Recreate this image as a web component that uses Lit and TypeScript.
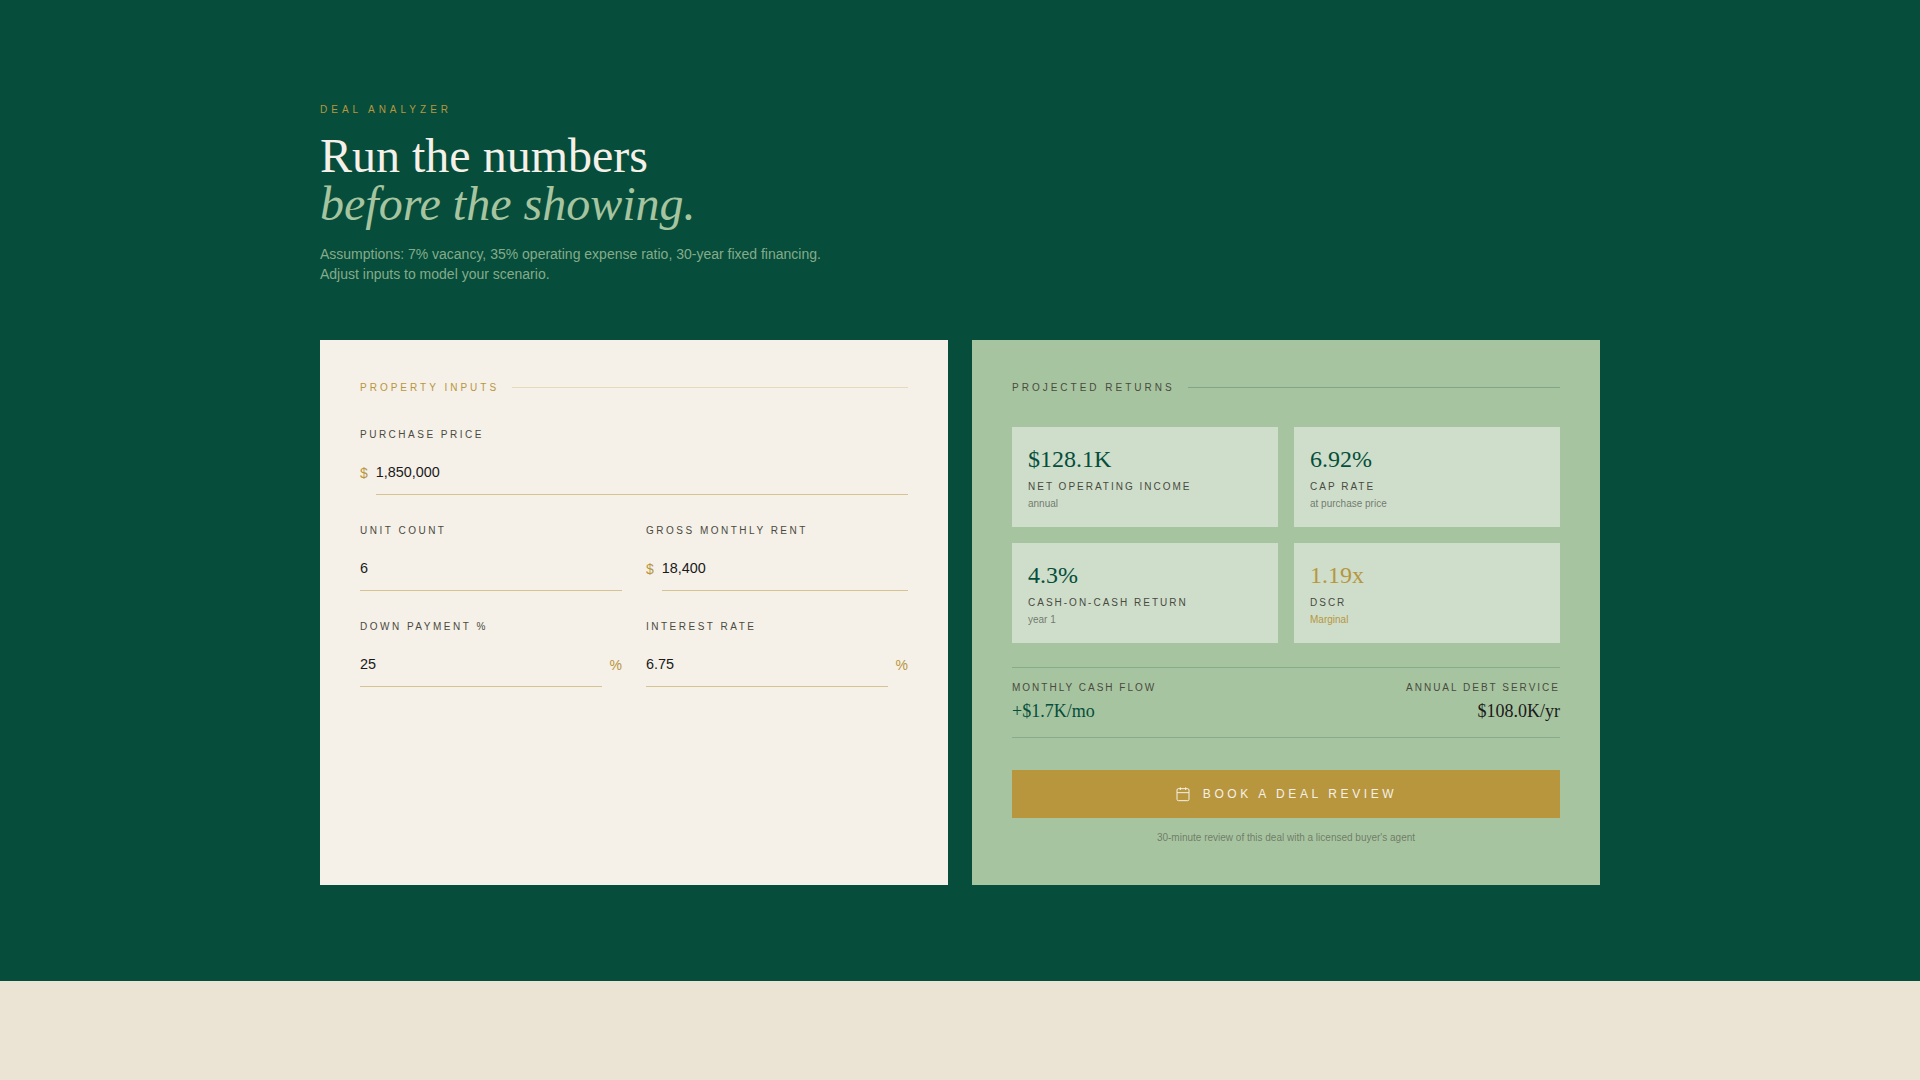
import { LitElement, html, css, nothing } from "lit";
import { customElement, property } from "lit/decorators.js";

@customElement("field-input")
class FieldInput extends LitElement {
  @property() label = "";
  @property() value = "";
  @property() prefixText = "";
  @property() suffixText = "";

  static styles = css`
    :host { display: block; min-width: 0; }
    .label {
      display: block;
      margin-bottom: 8px;
      font-size: 10px;
      line-height: 15px;
      letter-spacing: 0.25em;
      text-transform: uppercase;
      color: #4a4a3f;
    }
    .row { display: flex; align-items: center; gap: 8px; }
    .affix { font-size: 14px; line-height: 20px; color: #b8963e; }
    .input {
      flex: 1;
      min-width: 0;
      width: 0;
      box-sizing: border-box;
      height: 45px;
      margin: 0;
      padding: 12px 0;
      border: 0;
      border-bottom: 1px solid rgba(184, 150, 62, 0.5);
      border-radius: 0;
      outline: none;
      background: transparent;
      font: 14.4px/20px "Liberation Sans", Arial, sans-serif;
      color: #1a1a1a;
    }
  `;

  render() {
    return html`
      <label class="label" for="field">${this.label}</label>
      <div class="row">
        ${this.prefixText ? html`<span class="affix">${this.prefixText}</span>` : nothing}
        <input class="input" id="field" type="text" .value=${this.value} />
        ${this.suffixText ? html`<span class="affix">${this.suffixText}</span>` : nothing}
      </div>
    `;
  }
}

@customElement("metric-card")
class MetricCard extends LitElement {
  @property() value = "";
  @property() label = "";
  @property() note = "";
  @property({ type: Boolean, reflect: true }) warn = false;

  static styles = css`
    :host { display: block; padding: 16px; background: rgba(255, 255, 255, 0.45); }
    .value {
      font-family: "Liberation Serif", "Times New Roman", serif;
      font-size: 24px;
      line-height: 32px;
      color: #064e3b;
    }
    .label {
      margin-top: 4px;
      font-size: 10px;
      line-height: 15px;
      letter-spacing: 0.2em;
      text-transform: uppercase;
      color: #4a4a3f;
    }
    .note { margin-top: 2px; font-size: 10px; line-height: 15px; color: rgba(74, 74, 63, 0.7); }
    :host([warn]) .value, :host([warn]) .note { color: #b8963e; }
  `;

  render() {
    return html`
      <div class="value">${this.value}</div>
      <div class="label">${this.label}</div>
      <div class="note">${this.note}</div>
    `;
  }
}

@customElement("app-root")
class AppRoot extends LitElement {
  static styles = css`
    :host {
      display: block;
      min-height: 1080px;
      background: #ebe4d4;
      font-family: "Liberation Sans", Arial, sans-serif;
    }
    .section { padding: 102px 0 96px; background: #064e3b; }
    .container { width: 1280px; margin: 0 auto; }
    .eyebrow {
      font-size: 10px;
      line-height: 15px;
      letter-spacing: 0.4em;
      text-transform: uppercase;
      color: #b8963e;
    }
    .title {
      margin: 15px 0 0;
      font-family: "Liberation Serif", "Times New Roman", serif;
      font-size: 48px;
      line-height: 48px;
      font-weight: 400;
      color: #f5f0e8;
    }
    .title em { color: #a7c4a0; font-style: italic; }
    .intro {
      margin: 16px 0 56px;
      font-size: 14px;
      line-height: 20px;
      color: rgba(167, 196, 160, 0.8);
    }
    .panels { display: grid; grid-template-columns: 1fr 1fr; gap: 24px; }
    .panel { padding: 40px; }
    .inputs { background: #f5f0e8; }
    .returns { background: #a7c4a0; }
    .heading {
      display: flex;
      align-items: center;
      gap: 13px;
      margin-bottom: 32px;
      font-size: 10px;
      line-height: 15px;
      letter-spacing: 0.3em;
      text-transform: uppercase;
    }
    .heading::after { content: ""; flex: 1; height: 1px; }
    .inputs .heading { color: #b8963e; }
    .inputs .heading::after { background: rgba(184, 150, 62, 0.25); }
    .returns .heading { color: #4a4a3f; }
    .returns .heading::after { background: rgba(6, 78, 59, 0.25); }
    .fields { display: grid; grid-template-columns: 1fr 1fr; gap: 28px 24px; }
    .wide { grid-column: 1 / -1; }
    .metrics { display: grid; grid-template-columns: 1fr 1fr; gap: 16px; }
    .summary {
      display: flex;
      justify-content: space-between;
      margin: 24px 0 32px;
      padding: 12px 0;
      border: solid rgba(6, 78, 59, 0.2);
      border-width: 1px 0;
    }
    .right { text-align: right; }
    .sum-label {
      font-size: 10px;
      line-height: 15px;
      letter-spacing: 0.2em;
      text-transform: uppercase;
      color: #4a4a3f;
    }
    .sum-value {
      margin-top: 2px;
      font-family: "Liberation Serif", "Times New Roman", serif;
      font-size: 18px;
      line-height: 28px;
      color: #1a1a1a;
    }
    .positive { color: #064e3b; }
    .cta {
      display: flex;
      align-items: center;
      justify-content: center;
      gap: 12px;
      width: 100%;
      height: 48px;
      padding: 0;
      border: 0;
      background: #b8963e;
      font: 12px/16px "Liberation Sans", Arial, sans-serif;
      letter-spacing: 0.3em;
      text-transform: uppercase;
      color: #f5f0e8;
    }
    .icon { width: 16px; height: 16px; }
    .footnote {
      margin-top: 12px;
      font-size: 10px;
      line-height: 15px;
      text-align: center;
      color: rgba(74, 74, 63, 0.6);
    }
  `;

  render() {
    return html`
      <section class="section">
        <div class="container">
          <div class="eyebrow">Deal Analyzer</div>
          <h2 class="title">Run the numbers<br /><em>before the showing.</em></h2>
          <p class="intro">
            Assumptions: 7% vacancy, 35% operating expense ratio, 30-year fixed financing.<br />
            Adjust inputs to model your scenario.
          </p>
          <div class="panels">
            <div class="panel inputs">
              <div class="heading">Property Inputs</div>
              <div class="fields">
                <field-input class="wide" label="Purchase Price" prefixText="$" value="1,850,000"></field-input>
                <field-input label="Unit Count" value="6"></field-input>
                <field-input label="Gross Monthly Rent" prefixText="$" value="18,400"></field-input>
                <field-input label="Down Payment %" suffixText="%" value="25"></field-input>
                <field-input label="Interest Rate" suffixText="%" value="6.75"></field-input>
              </div>
            </div>
            <div class="panel returns">
              <div class="heading">Projected Returns</div>
              <div class="metrics">
                <metric-card value="$128.1K" label="Net Operating Income" note="annual"></metric-card>
                <metric-card value="6.92%" label="Cap Rate" note="at purchase price"></metric-card>
                <metric-card value="4.3%" label="Cash-on-Cash Return" note="year 1"></metric-card>
                <metric-card value="1.19x" label="DSCR" note="Marginal" warn></metric-card>
              </div>
              <div class="summary">
                <div>
                  <div class="sum-label">Monthly Cash Flow</div>
                  <div class="sum-value positive">+$1.7K/mo</div>
                </div>
                <div class="right">
                  <div class="sum-label">Annual Debt Service</div>
                  <div class="sum-value">$108.0K/yr</div>
                </div>
              </div>
              <button class="cta" type="button">
                <svg class="icon" viewBox="0 0 24 24" fill="none" stroke="currentColor" stroke-width="1.5" stroke-linejoin="round">
                  <path d="M8 2v4M16 2v4M3 10h18" />
                  <rect x="3" y="4" width="18" height="18" rx="2" />
                </svg>
                <span>Book a Deal Review</span>
              </button>
              <div class="footnote">30-minute review of this deal with a licensed buyer's agent</div>
            </div>
          </div>
        </div>
      </section>
    `;
  }
}
